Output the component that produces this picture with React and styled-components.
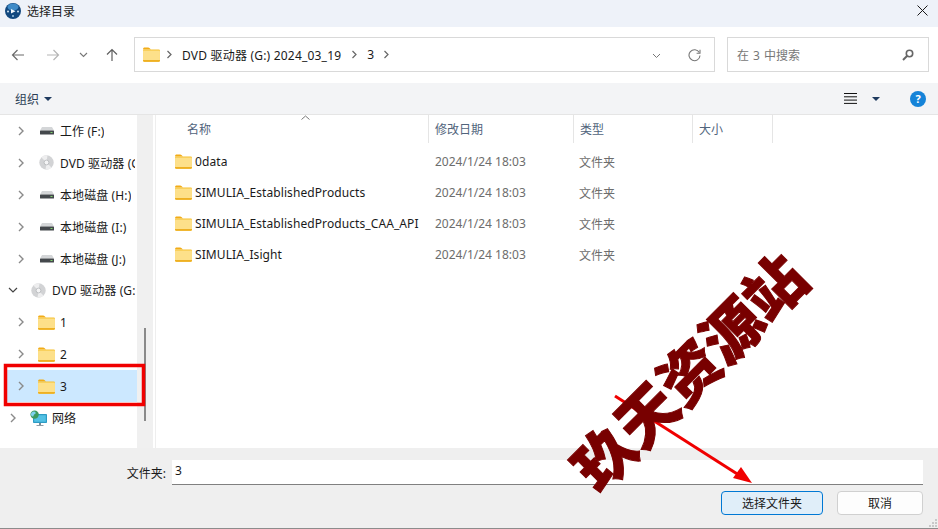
import React from 'react'
import styled, { createGlobalStyle } from 'styled-components'

const GlobalStyle = createGlobalStyle`
  html, body {
    margin: 0;
    padding: 0;
    background: #fff;
  }
  * {
    box-sizing: border-box;
  }
`

const FONT = `"Noto Sans", "Noto Sans CJK SC", sans-serif`

const treeItems = [
  { label: '工作 (F:)', icon: 'drive', level: 1 },
  { label: 'DVD 驱动器 (G:)', icon: 'disc', level: 1 },
  { label: '本地磁盘 (H:)', icon: 'drive', level: 1 },
  { label: '本地磁盘 (I:)', icon: 'drive', level: 1 },
  { label: '本地磁盘 (J:)', icon: 'drive', level: 1 },
  { label: 'DVD 驱动器 (G:) 2024_03_19', icon: 'disc', level: 0, open: true },
  { label: '1', icon: 'folder', level: 1 },
  { label: '2', icon: 'folder', level: 1 },
  { label: '3', icon: 'folder', level: 1, selected: true },
  { label: '网络', icon: 'network', level: 0 },
]

const files = ['0data', 'SIMULIA_EstablishedProducts', 'SIMULIA_EstablishedProducts_CAA_API', 'SIMULIA_Isight']

function Folder({ size = 17 }) {
  return (
    <svg width={size} height={size * 0.88} viewBox="0 0 17 15">
      <path d="M0 2.2C0 1.2.7.5 1.6.5h3.6c.5 0 .9.2 1.2.5L8 2.5H0z" fill="#f2ac17" />
      <rect x="0" y="2.5" width="17" height="12.2" rx="1.2" fill="#f5c02f" />
      <rect x="0" y="3.6" width="17" height="10" rx=".8" fill="#fde08a" />
      <path d="M0 13h17v.6c0 .6-.5 1.1-1.2 1.1H1.2C.5 14.7 0 14.2 0 13.6z" fill="#eeb023" />
    </svg>
  )
}

function Drive() {
  return (
    <svg width="14" height="8" viewBox="0 0 14 8">
      <path d="M2 0h10l2 3.5H0z" fill="#d4d6d8" />
      <rect y="3.5" width="14" height="4" rx=".6" fill="#44484c" />
      <rect x="10.5" y="5" width="2" height="1" fill="#7fd06c" />
    </svg>
  )
}

function Disc() {
  return (
    <svg width="15" height="15" viewBox="0 0 15 15">
      <circle cx="7.5" cy="7.5" r="7.2" fill="#d2d3d5" />
      <path d="M7.5 7.5 2.5 2.5a7 7 0 0 1 6-2.2zM7.5 7.5l5 5a7 7 0 0 1-6 2.2z" fill="#eeeeef" />
      <circle cx="7.5" cy="7.5" r="2.4" fill="#f4f4f5" stroke="#aeb0b3" strokeWidth=".7" />
    </svg>
  )
}

function Network() {
  return (
    <svg width="17" height="16" viewBox="0 0 17 16">
      <rect x="3" y="4" width="14" height="9" rx=".8" fill="#2c9bc4" />
      <rect x="4.2" y="5.2" width="11.6" height="6.6" fill="#53c1e4" />
      <rect x="9" y="13" width="2" height="2" fill="#7b8b96" />
      <rect x="6.5" y="15" width="7" height="1" fill="#8e9ca6" />
      <circle cx="4.6" cy="4.6" r="4.2" fill="#3c9a5f" />
      <path d="M2 2.2c1.4-1 3-.9 3.6.2.5 1-.6 1.4-1.4 2-.8.6-.4 1.8-1.2 2C2 6.7.5 5 .8 4z" fill="#7fd1ef" />
    </svg>
  )
}

function AppLogo() {
  return (
    <svg width="16" height="16" viewBox="0 0 16 16">
      <circle cx="8" cy="8" r="8" fill="#12487f" />
      <ellipse cx="8" cy="4" rx="5.5" ry="3.5" fill="#3f8bc8" />
      <circle cx="3" cy="8.5" r="1" fill="#d5e6f4" />
      <circle cx="13" cy="8.5" r="1" fill="#d5e6f4" />
      <circle cx="8" cy="13" r="1" fill="#9dc3e2" />
      <path d="M6 6l4.5 2.3L6 10.6z" fill="#f4f8fb" />
    </svg>
  )
}

function Chevron({ open }) {
  return open ? (
    <svg width="10" height="10" viewBox="0 0 10 10">
      <path d="M1 3l4 4 4-4" fill="none" stroke="#444" strokeWidth="1.2" />
    </svg>
  ) : (
    <svg width="10" height="10" viewBox="0 0 10 10">
      <path d="M3 1l4 4-4 4" fill="none" stroke="#8a8a8a" strokeWidth="1.4" />
    </svg>
  )
}

function Crumb() {
  return (
    <svg width="7" height="9" viewBox="0 0 7 9">
      <path d="M1.5 1L5 4.5 1.5 8" fill="none" stroke="#666" strokeWidth="1.2" />
    </svg>
  )
}

const treeIcons = {
  drive: <Drive />,
  disc: <Disc />,
  folder: <Folder />,
  network: <Network />,
}

export default function App() {
  return (
    <Dialog>
      <GlobalStyle />
      <TitleBar>
        <AppLogo />
        <TitleText>选择目录</TitleText>
        <CloseButton>
          <svg width="11" height="11" viewBox="0 0 11 11">
            <path d="M.5.5l10 10M10.5.5l-10 10" stroke="#1a1a1a" strokeWidth="1" />
          </svg>
        </CloseButton>
      </TitleBar>

      <NavRow>
        <NavButtons>
          <NavIcon>
            <svg width="14" height="14" viewBox="0 0 14 14">
              <path d="M13 7H1.5M6.5 2L1.5 7l5 5" fill="none" stroke="#6b6b6b" strokeWidth="1.2" />
            </svg>
          </NavIcon>
          <NavIcon>
            <svg width="14" height="14" viewBox="0 0 14 14">
              <path d="M1 7h11.5M7.5 2l5 5-5 5" fill="none" stroke="#b5b5b5" strokeWidth="1.2" />
            </svg>
          </NavIcon>
          <NavIcon>
            <svg width="9" height="6" viewBox="0 0 9 6">
              <path d="M1 1l3.5 3.5L8 1" fill="none" stroke="#777" strokeWidth="1.1" />
            </svg>
          </NavIcon>
          <NavIcon>
            <svg width="14" height="14" viewBox="0 0 14 14">
              <path d="M7 13V1.5M2 6.5l5-5 5 5" fill="none" stroke="#5f5f5f" strokeWidth="1.2" />
            </svg>
          </NavIcon>
        </NavButtons>
        <AddressBox>
          <Folder />
          <CrumbGap $width={22} $pad={4}><Crumb /></CrumbGap>
          <CrumbText>DVD 驱动器 (G:) 2024_03_19</CrumbText>
          <CrumbGap $width={26}><Crumb /></CrumbGap>
          <CrumbText>3</CrumbText>
          <CrumbGap $width={24}><Crumb /></CrumbGap>
          <AddressTools>
            <svg width="9" height="6" viewBox="0 0 9 6">
              <path d="M1 1l3.5 3.5L8 1" fill="none" stroke="#777" strokeWidth="1" />
            </svg>
            <svg width="13" height="13" viewBox="0 0 13 13">
              <path d="M11.3 3.5A5.5 5.5 0 1 0 12 6.5" fill="none" stroke="#777" strokeWidth="1.1" />
              <path d="M12 .8v3.4H8.6" fill="none" stroke="#777" strokeWidth="1.1" />
            </svg>
          </AddressTools>
        </AddressBox>
        <SearchBox>
          <span>在 3 中搜索</span>
          <svg width="12" height="12" viewBox="0 0 12 12">
            <circle cx="7.5" cy="4.5" r="3.2" fill="none" stroke="#666" strokeWidth="1.6" />
            <path d="M5 7L1 11" stroke="#666" strokeWidth="2" />
          </svg>
        </SearchBox>
      </NavRow>

      <ToolBar>
        <OrganizeButton>
          组织
          <Caret />
        </OrganizeButton>
        <ToolGroup>
          <svg width="13" height="11" viewBox="0 0 13 11">
            <path d="M0 .5h13M0 3.8h13M0 7.1h13M0 10.4h13" stroke="#111" strokeWidth="1" />
          </svg>
          <Caret />
          <HelpBadge>?</HelpBadge>
        </ToolGroup>
      </ToolBar>

      <Main>
        <Tree>
          {treeItems.map((item) => (
            <TreeRow key={item.label} $selected={item.selected} $level={item.level}>
              <ChevronSlot><Chevron open={item.open} /></ChevronSlot>
              <TreeIcon>{treeIcons[item.icon]}</TreeIcon>
              <TreeLabel>{item.label}</TreeLabel>
            </TreeRow>
          ))}
        </Tree>
        <ScrollTrack>
          <ScrollThumb />
        </ScrollTrack>
        <ListPane>
          <ListHeader>
            <HeaderCell $first>
              名称
              <SortCaret>
                <svg width="9" height="5" viewBox="0 0 9 5">
                  <path d="M.5 4.5l4-3.5 4 3.5" fill="none" stroke="#777" strokeWidth="1" />
                </svg>
              </SortCaret>
            </HeaderCell>
            <HeaderCell>修改日期</HeaderCell>
            <HeaderCell>类型</HeaderCell>
            <HeaderCell>大小</HeaderCell>
          </ListHeader>
          <FileList>
            {files.map((name) => (
              <FileRow key={name}>
                <FileName>
                  <Folder />
                  <span>{name}</span>
                </FileName>
                <FileMeta>2024/1/24 18:03</FileMeta>
                <FileMeta>文件夹</FileMeta>
              </FileRow>
            ))}
          </FileList>
        </ListPane>
      </Main>

      <Footer>
        <FolderField>
          <FieldLabel>文件夹:</FieldLabel>
          <FieldInput>3</FieldInput>
        </FolderField>
        <ButtonRow>
          <DialogButton $primary>选择文件夹</DialogButton>
          <DialogButton>取消</DialogButton>
        </ButtonRow>
      </Footer>

      <Annotations width="938" height="529" viewBox="0 0 938 529">
        <rect x="5.5" y="365.5" width="138" height="39" fill="none" stroke="#f00000" strokeWidth="3.5" />
        <path d="M615 396L742 477" stroke="#f00000" strokeWidth="3" />
        <path d="M752 483L733 478 741 467z" fill="#f00000" />
        <path d="M935 519h2v2h-2zM932 522h2v2h-2zM935 522h2v2h-2zM929 525h2v2h-2zM932 525h2v2h-2zM935 525h2v2h-2z" fill="#c8c8c8" />
      </Annotations>
      <Watermark>玖天资源站</Watermark>
    </Dialog>
  )
}

const Dialog = styled.div`
  position: relative;
  width: 938px;
  height: 529px;
  overflow: hidden;
  display: flex;
  flex-direction: column;
  background: #fff;
  font-family: ${FONT};
  font-size: 12px;
  color: #1a1a1a;
`

const TitleBar = styled.div`
  height: 27px;
  flex: none;
  display: flex;
  align-items: center;
  padding: 0 0 6px 5px;
  background: #eef2f9;
`

const TitleText = styled.span`
  margin-left: 6px;
  font-size: 12px;
  color: #222;
`

const CloseButton = styled.div`
  margin-left: auto;
  width: 39px;
  display: flex;
  justify-content: center;
  padding-left: 8px;
`

const NavRow = styled.div`
  height: 56px;
  flex: none;
  display: flex;
  align-items: center;
  padding: 0 9px 1px 0;
`

const NavButtons = styled.div`
  width: 134px;
  flex: none;
  display: grid;
  grid-template-columns: 30px 40px 20px 38px;
  align-items: center;
  justify-items: center;
  padding-left: 3px;
`

const NavIcon = styled.div`
  display: flex;
`

const AddressBox = styled.div`
  width: 581px;
  height: 35px;
  flex: none;
  display: flex;
  align-items: center;
  padding-left: 8px;
  border: 1px solid #d9d9d9;
`

const CrumbGap = styled.span`
  width: ${(p) => p.$width}px;
  padding-right: ${(p) => p.$pad || 0}px;
  flex: none;
  display: flex;
  justify-content: center;
`

const CrumbText = styled.span`
  font-size: 12px;
  letter-spacing: 0.2px;
  color: #1a1a1a;
`

const AddressTools = styled.div`
  margin-left: auto;
  display: flex;
  align-items: center;
  gap: 27px;
  padding: 2px 13px 0 0;
`

const SearchBox = styled.div`
  margin-left: 12px;
  width: 202px;
  height: 35px;
  flex: none;
  display: flex;
  align-items: center;
  justify-content: space-between;
  padding: 0 14px 0 9px;
  border: 1px solid #d9d9d9;
  color: #777;
  word-spacing: 1px;
`

const ToolBar = styled.div`
  height: 32px;
  flex: none;
  display: flex;
  align-items: center;
  justify-content: space-between;
  padding: 0 12px 0 15px;
  background: #f3f4f6;
  border-bottom: 1px solid #e5e5e5;
`

const OrganizeButton = styled.div`
  display: flex;
  align-items: center;
  gap: 5px;
  color: #2c3e55;
`

const Caret = styled.span`
  width: 0;
  height: 0;
  border-left: 4px solid transparent;
  border-right: 4px solid transparent;
  border-top: 4px solid #1f3a5f;
`

const ToolGroup = styled.div`
  display: flex;
  align-items: center;
  gap: 15px;
`

const HelpBadge = styled.span`
  width: 16px;
  height: 16px;
  margin-left: 15px;
  border-radius: 50%;
  background: #1583d8;
  color: #fff;
  font-size: 11px;
  font-weight: 700;
  line-height: 16px;
  text-align: center;
`

const Main = styled.div`
  flex: 1;
  min-height: 0;
  display: flex;
`

const Tree = styled.div`
  width: 137px;
  flex: none;
  overflow: hidden;
  display: flex;
  flex-direction: column;
`

const TreeRow = styled.div`
  height: 31.9px;
  flex: none;
  display: flex;
  align-items: center;
  margin-left: 7px;
  padding: 0 2px 0 ${(p) => (p.$level ? 9 : 1)}px;
  white-space: nowrap;
  background: ${(p) => (p.$selected ? '#cce8ff' : 'transparent')};
`

const ChevronSlot = styled.span`
  width: 10px;
  flex: none;
  display: flex;
`

const TreeIcon = styled.span`
  width: 17px;
  flex: none;
  margin-left: 12px;
  display: flex;
  justify-content: center;
`

const TreeLabel = styled.span`
  margin-left: 5px;
  min-width: 0;
  overflow: hidden;
  letter-spacing: 0.1px;
  color: #1a1a1a;
`

const ScrollTrack = styled.div`
  width: 16px;
  flex: none;
  background: #f0f0f0;
  padding: 213px 7px 27px;
`

const ScrollThumb = styled.div`
  width: 2px;
  height: 93px;
  background: #8a8a8a;
`

const ListPane = styled.div`
  flex: 1;
  min-width: 0;
  margin-left: 2px;
  border-left: 1px solid #eeeeee;
`

const ListHeader = styled.div`
  height: 28px;
  display: grid;
  grid-template-columns: 273px 145px 119px 80px;
`

const HeaderCell = styled.div`
  position: relative;
  display: flex;
  align-items: center;
  padding-left: ${(p) => (p.$first ? 31 : 6)}px;
  color: #51647c;
  border-right: 1px solid #e5e5e5;
`

const SortCaret = styled.span`
  position: absolute;
  top: 0;
  left: 145px;
  line-height: 0;
`

const FileList = styled.div`
  padding-top: 3px;
`

const FileRow = styled.div`
  height: 31px;
  display: grid;
  grid-template-columns: 273px 144px 1fr;
  align-items: center;
`

const FileName = styled.div`
  display: flex;
  align-items: center;
  gap: 3px;
  padding-left: 19px;
  white-space: nowrap;
  letter-spacing: 0.09px;
  color: #1a1a1a;
`

const FileMeta = styled.div`
  padding-left: 6px;
  color: #6d6d6d;
  white-space: nowrap;
`

const Footer = styled.div`
  height: 81px;
  flex: none;
  padding: 12px 15px 0 0;
  background: #efefef;
  border-bottom: 1px solid #8c8c8c;
`

const FolderField = styled.div`
  display: flex;
  align-items: center;
  height: 25px;
`

const FieldLabel = styled.span`
  width: 166px;
  flex: none;
  text-align: right;
`

const FieldInput = styled.div`
  margin-left: 6px;
  flex: 1;
  height: 25px;
  padding: 0 3px;
  line-height: 22px;
  background: #fff;
  border-bottom: 1px solid #808080;
`

const ButtonRow = styled.div`
  display: flex;
  justify-content: flex-end;
  gap: 14px;
  margin-top: 6px;
`

const DialogButton = styled.div`
  width: ${(p) => (p.$primary ? 102 : 86)}px;
  height: 24px;
  display: flex;
  align-items: center;
  justify-content: center;
  border-radius: 4px;
  background: ${(p) => (p.$primary ? '#e0eef9' : '#fdfdfd')};
  border: 1px solid ${(p) => (p.$primary ? '#0078d4' : '#d0d0d0')};
`

const Annotations = styled.svg`
  position: absolute;
  top: 0;
  left: 0;
  pointer-events: none;
`

const Watermark = styled.div`
  position: absolute;
  left: 527px;
  top: 335px;
  width: 320px;
  height: 70px;
  font-family: "Noto Sans CJK SC", sans-serif;
  font-size: 60px;
  font-weight: 900;
  line-height: 70px;
  white-space: nowrap;
  text-align: center;
  color: #780000;
  -webkit-text-stroke: 1px #780000;
  transform: rotate(-45deg);
`
